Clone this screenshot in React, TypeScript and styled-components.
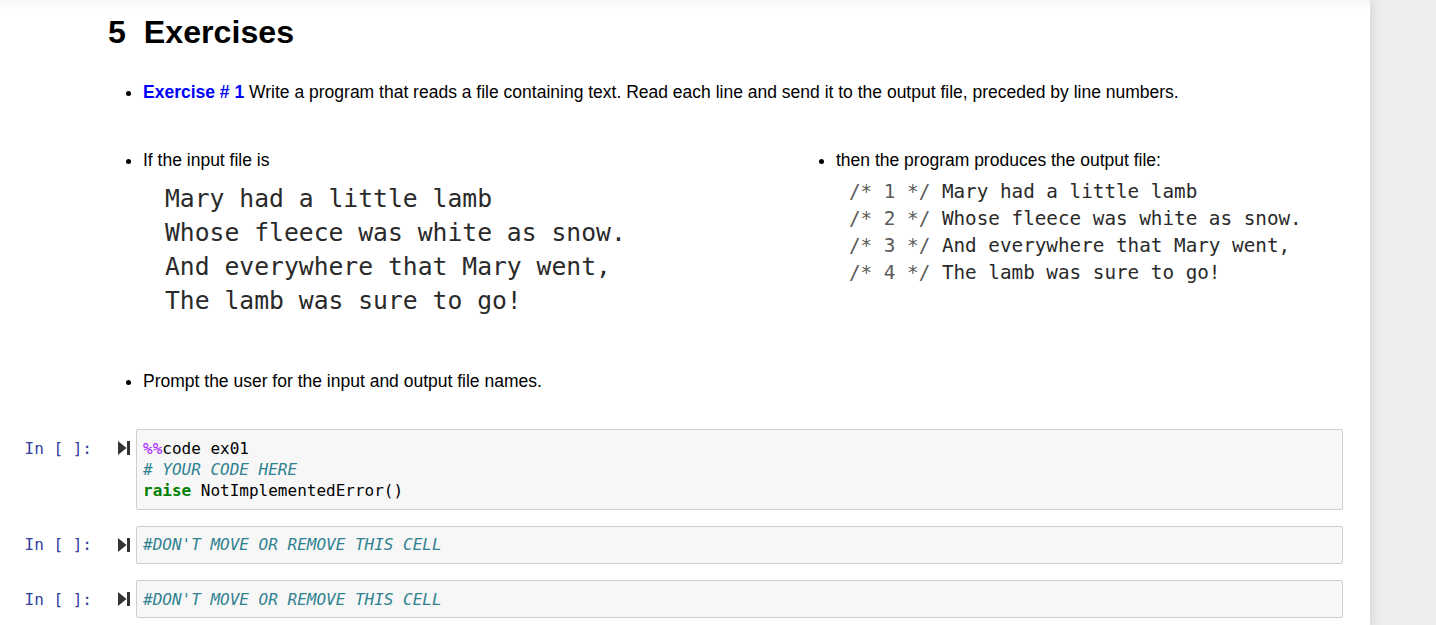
import React from "react";
import styled, { createGlobalStyle } from "styled-components";

const Global = createGlobalStyle`
  html, body { margin: 0; padding: 0; background: #eeeeee; }
  body { font-family: "Liberation Sans", Arial, sans-serif; color: #000; }
`;

const Page = styled.div`
  display: flex;
  min-height: 625px;
  background: #eeeeee;
  position: relative;
  overflow: hidden;
`;

const Notebook = styled.div`
  width: 1370px;
  flex: none;
  background: #ffffff;
  box-shadow: 0 0 12px 1px rgba(87, 87, 87, 0.2);
  padding: 0 27px 10px 0;
  box-sizing: border-box;
  position: relative;
`;

const TopShade = styled.div`
  position: absolute;
  left: 0;
  right: 0;
  top: 0;
  height: 10px;
  background: linear-gradient(to bottom, rgba(0, 0, 0, 0.04), rgba(0, 0, 0, 0));
  pointer-events: none;
  z-index: 2;
`;

const Markdown = styled.div`
  padding-left: 108px;
  font-size: 17.5px;
  line-height: 25px;
`;

const Heading = styled.h1`
  margin: 12px 0 0;
  font-size: 32.2px;
  line-height: 40px;
  font-weight: bold;
  white-space: pre;
`;

const Bullets = styled.ul<{ $top: number }>`
  margin: ${(p) => p.$top}px 0 0;
  padding-left: 35px;
  list-style: disc;
  li { line-height: 25px; }
`;

const Strong = styled.strong`
  color: #0000ff;
`;

const Columns = styled.div`
  display: grid;
  grid-template-columns: 693px 1fr;
  margin-top: 43px;
`;

const Poem = styled.pre<{ $size: number; $line: number; $indent: number; $top: number }>`
  margin: ${(p) => p.$top}px 0 0 ${(p) => p.$indent}px;
  font-family: "DejaVu Sans Mono", monospace;
  font-size: ${(p) => p.$size}px;
  line-height: ${(p) => p.$line}px;
  color: #2a2a2a;
`;

const Num = styled.span`
  color: #5a5a5a;
`;

const Cells = styled.div`
  display: flex;
  flex-direction: column;
  gap: 16px;
  margin-top: 35.5px;
`;

const CellRow = styled.div`
  display: flex;
  align-items: flex-start;
`;

const Prompt = styled.div`
  width: 92px;
  flex: none;
  text-align: right;
  padding-top: 8.5px;
  font-family: "DejaVu Sans Mono", monospace;
  font-size: 16px;
  line-height: 21.25px;
  color: #303f9f;
  white-space: pre;
`;

const RunSlot = styled.div`
  width: 44px;
  flex: none;
  display: flex;
  justify-content: flex-start;
  padding: 12px 0 0 26px;
  box-sizing: border-box;
  color: #333;
`;

const InputArea = styled.pre`
  flex: 1;
  margin: 0;
  background: #f7f7f7;
  border: 1px solid #cfcfcf;
  border-radius: 2px;
  padding: 7.5px 6px;
  font-family: "DejaVu Sans Mono", monospace;
  font-size: 16px;
  line-height: 21.25px;
  color: #000;
`;

const Magic = styled.span`
  color: #aa22ff;
`;

const Comment = styled.span`
  color: #2f8190;
  font-style: italic;
`;

const Keyword = styled.span`
  color: #008000;
  font-weight: bold;
`;

const Sidebar = styled.div`
  flex: 1;
  background: #eeeeee;
`;

const RunIcon = () => (
  <svg width="12" height="14" viewBox="0 0 12 14" fill="currentColor">
    <polygon points="0,0 8.5,7 0,14" />
    <rect x="9" y="0" width="3" height="14" />
  </svg>
);

const Cell: React.FC<{ children: React.ReactNode }> = ({ children }) => (
  <CellRow>
    <Prompt>{"In [ ]:"}</Prompt>
    <RunSlot>
      <RunIcon />
    </RunSlot>
    <InputArea>{children}</InputArea>
  </CellRow>
);

const lines = [
  "Mary had a little lamb",
  "Whose fleece was white as snow.",
  "And everywhere that Mary went,",
  "The lamb was sure to go!",
];

export default function App() {
  return (
    <>
      <Global />
      <Page>
        <Notebook>
          <TopShade />
          <Markdown>
            <Heading>{"5\u00a0\u00a0Exercises"}</Heading>
            <Bullets $top={27.5}>
              <li>
                <Strong>Exercise # 1</Strong> Write a program that reads a file containing text. Read each line and
                send it to the output file, preceded by line numbers.
              </li>
            </Bullets>
            <Columns>
              <div>
                <Bullets $top={0}>
                  <li>If the input file is</li>
                </Bullets>
                <Poem $size={24.7} $line={34} $indent={57} $top={9}>
                  {lines.join("\n")}
                </Poem>
              </div>
              <div>
                <Bullets $top={0}>
                  <li>then the program produces the output file:</li>
                </Bullets>
                <Poem $size={19.3} $line={27} $indent={48} $top={5.5}>
                  {lines.map((l, i) => (
                    <React.Fragment key={i}>
                      <Num>{`/* ${i + 1} */`}</Num> {l}
                      {i < lines.length - 1 ? "\n" : ""}
                    </React.Fragment>
                  ))}
                </Poem>
              </div>
            </Columns>
            <Bullets $top={51}>
              <li>Prompt the user for the input and output file names.</li>
            </Bullets>
          </Markdown>
          <Cells>
            <Cell>
              <Magic>%%</Magic>code ex01{"\n"}
              <Comment># YOUR CODE HERE</Comment>
              {"\n"}
              <Keyword>raise</Keyword> NotImplementedError()
            </Cell>
            <Cell>
              <Comment>#DON'T MOVE OR REMOVE THIS CELL</Comment>
            </Cell>
            <Cell>
              <Comment>#DON'T MOVE OR REMOVE THIS CELL</Comment>
            </Cell>
          </Cells>
        </Notebook>
        <Sidebar />
      </Page>
    </>
  );
}
